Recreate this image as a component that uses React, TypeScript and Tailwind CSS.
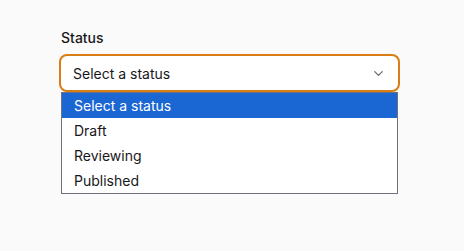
import { ChevronDown } from 'lucide-react';

const options = ['Select a status', 'Draft', 'Reviewing', 'Published'];

export default function App() {
  return (
    <div
      className="min-h-[251px] w-full bg-[#fafafa] pl-[59px] pt-[28px]"
      style={{ fontFamily: 'Inter, "Noto Sans", sans-serif' }}
    >
      <div className="w-[341px]">
        <label className="mb-[6px] ml-[2px] block text-[14px] leading-[20px] font-medium text-zinc-900">Status</label>
        <div className="flex h-[38px] items-center justify-between rounded-[8px] border-2 border-[#d97d14] bg-white pl-[12px] pr-[12px]">
          <span className="text-[14px] text-zinc-900">Select a status</span>
          <ChevronDown className="h-[15px] w-[15px] text-zinc-500" strokeWidth={2.25} />
        </div>
        <ul className="ml-[2px] w-[337px] border border-zinc-500 bg-white">
          {options.map((o, i) => (
            <li
              key={o}
              className={`flex h-[25px] items-center pl-[12px] text-[14px] ${
                i === 0 ? 'bg-[#1a66d2] text-white' : 'text-zinc-900'
              }`}
            >
              {o}
            </li>
          ))}
        </ul>
      </div>
    </div>
  );
}
